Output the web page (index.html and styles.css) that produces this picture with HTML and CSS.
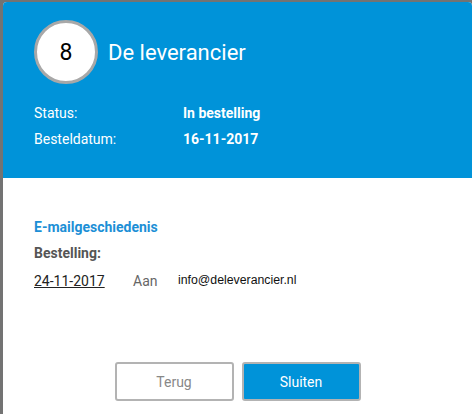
FILE: index.html
```html
<!DOCTYPE html>
<html lang="nl">
<head>
    <meta charset="UTF-8">
    <title>Bestelling</title>
    <link rel="stylesheet" href="styles.css">
</head>
<body>
    <div class="modal">
        <div class="modal-header">
            <div class="header-title">
                <div class="badge">8</div>
                <h1>De leverancier</h1>
            </div>
            <div class="info-row">
                <span class="info-label">Status:</span>
                <span class="info-value">In bestelling</span>
            </div>
            <div class="info-row">
                <span class="info-label">Besteldatum:</span>
                <span class="info-value">16-11-2017</span>
            </div>
        </div>
        <div class="modal-body">
            <h2>E-mailgeschiedenis</h2>
            <div class="sub-title">Bestelling:</div>
            <div class="mail-row">
                <a class="mail-date" href="#">24-11-2017</a>
                <span class="mail-to">Aan</span>
                <span class="mail-address">info@deleverancier.nl</span>
            </div>
        </div>
        <div class="modal-footer">
            <button class="btn">Terug</button>
            <button class="btn btn-primary">Sluiten</button>
        </div>
    </div>
</body>
</html>
```

FILE: styles.css
```css
body {
    margin: 0;
    padding: 2px 0 0 3px;
    background-color: #737373;
    font-family: Roboto, "Liberation Sans", sans-serif;
    height: 414px;
    box-sizing: border-box;
    overflow: hidden;
}
.modal {
    background-color: #ffffff;
    border-radius: 4px 4px 0 0;
    overflow: hidden;
    height: 412px;
}
.modal-header {
    background-color: #0093d9;
    color: #ffffff;
    height: 176px;
    box-sizing: border-box;
    padding: 18px 0 0 31px;
}
.header-title {
    display: flex;
    align-items: center;
    gap: 10px;
    margin-bottom: 16px;
}
.badge {
    width: 58px;
    height: 58px;
    border: 3px solid #a8a8a8;
    border-radius: 50%;
    background-color: #ffffff;
    color: #000000;
    font-size: 23px;
    display: flex;
    align-items: center;
    justify-content: center;
}
.header-title h1 {
    margin: 0;
    font-size: 22px;
    font-weight: 400;
}
.info-row {
    display: flex;
    font-size: 14px;
    line-height: 26px;
}
.info-label {
    width: 149px;
}
.info-value {
    font-weight: 700;
}
.modal-body {
    padding: 40px 0 0 31px;
    height: 168px;
    box-sizing: border-box;
}
.modal-body h2 {
    margin: 0;
    font-size: 14px;
    font-weight: 700;
    color: #1c8fd6;
    line-height: 18px;
}
.sub-title {
    margin-top: 8px;
    font-size: 14px;
    font-weight: 700;
    color: #555555;
    line-height: 18px;
}
.mail-row {
    display: flex;
    align-items: baseline;
    margin-top: 11px;
    font-size: 14px;
}
.mail-date {
    color: #222222;
    width: 99px;
}
.mail-to {
    color: #666666;
    width: 45px;
}
.mail-address {
    font-family: "Liberation Sans", Arial, sans-serif;
    font-size: 12.3px;
    color: #111111;
    position: relative;
    top: -2px;
}
.modal-footer {
    display: flex;
    justify-content: center;
    gap: 8px;
    padding-top: 16px;
}
.btn {
    width: 119px;
    height: 39px;
    border: 2px solid #b3b3b3;
    border-radius: 3px;
    background-color: #ffffff;
    color: #888888;
    font-family: Roboto, sans-serif;
    font-size: 14px;
}
.btn-primary {
    background-color: #0093d9;
    color: #ffffff;
}
```
